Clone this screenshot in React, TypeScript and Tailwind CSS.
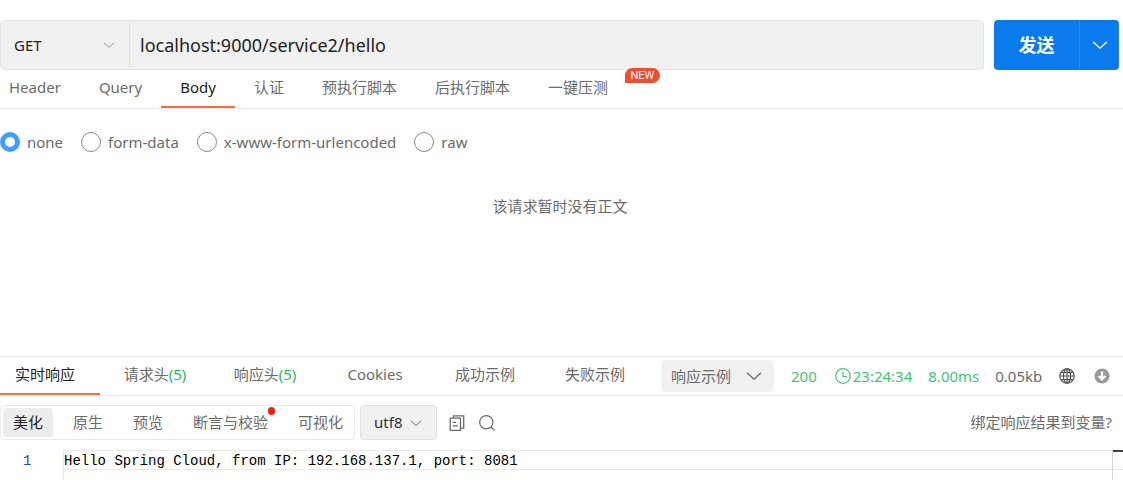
import { useState } from "react";

const requestTabs = [
  "Header",
  "Query",
  "Body",
  "认证",
  "预执行脚本",
  "后执行脚本",
  "一键压测",
];

const bodyTypes = ["none", "form-data", "x-www-form-urlencoded", "raw"];

const responseTabs = [
  { label: "实时响应" },
  { label: "请求头", count: 5 },
  { label: "响应头", count: 5 },
  { label: "Cookies" },
  { label: "成功示例" },
  { label: "失败示例" },
];

const viewModes = ["美化", "原生", "预览", "断言与校验", "可视化"];

const Chevron = ({ className }: { className: string }) => (
  <svg viewBox="0 0 16 8" fill="none" stroke="currentColor" className={className}>
    <path d="M1 0.8 8 7.2 15 0.8" strokeWidth="1.3" />
  </svg>
);

const ClockIcon = () => (
  <svg viewBox="0 0 16 16" fill="none" stroke="currentColor" className="h-4 w-4">
    <circle cx="8" cy="8" r="7.3" strokeWidth="1.2" />
    <path d="M8 4v4.5h4" strokeWidth="1.2" />
  </svg>
);

const GlobeIcon = () => (
  <svg viewBox="0 0 16 16" fill="none" stroke="currentColor" className="h-4 w-4">
    <circle cx="8" cy="8" r="7.2" strokeWidth="1.2" />
    <ellipse cx="8" cy="8" rx="3.6" ry="7.2" strokeWidth="1.2" />
    <path d="M8 .8v14.4M.8 8h14.4M2 4.4h12M2 11.6h12" strokeWidth="1.2" />
  </svg>
);

const DownloadIcon = () => (
  <svg viewBox="0 0 16 16" className="h-4 w-4">
    <circle cx="8" cy="8" r="7.6" fill="#999" />
    <path d="M8 3.4v7M4.6 8 8 11.4 11.4 8" fill="none" stroke="#fff" strokeWidth="2.2" />
  </svg>
);

const CopyIcon = () => (
  <svg viewBox="0 0 16 16" fill="none" stroke="currentColor" className="h-4 w-4">
    <path d="M4.5 3V.8h10.2v12.4h-3" strokeWidth="1.3" />
    <rect x="1.2" y="3.2" width="10.3" height="12.2" rx="0.5" strokeWidth="1.3" />
    <path d="M3.8 7.4h3.4M3.8 10.9h5" strokeWidth="1.3" />
  </svg>
);

const SearchIcon = () => (
  <svg viewBox="0 0 16 16" fill="none" stroke="currentColor" className="h-4 w-4">
    <circle cx="7.3" cy="7.3" r="6.6" strokeWidth="1.2" />
    <path d="m12 12 3.6 3.4" strokeWidth="1.3" />
  </svg>
);

const RequestBar = () => (
  <div className="flex gap-[10px] pr-1">
    <div className="flex h-[50px] flex-1 items-center rounded border border-[#e4e4e4] bg-[#f1f1f1]">
      <div className="relative flex h-[46px] w-[129px] items-center border-r border-[#e2e2e2]">
        <select
          aria-label="请求方法"
          className="h-full w-full appearance-none pl-[13px] text-[#222] outline-none"
        >
          <option>GET</option>
          <option>POST</option>
        </select>
        <Chevron className="pointer-events-none absolute right-[14px] h-2 w-3 text-[#999]" />
      </div>
      <input
        aria-label="请求地址"
        defaultValue="localhost:9000/service2/hello"
        className="h-full flex-1 px-[10px] text-lg text-[#222] outline-none"
      />
    </div>
    <div className="flex h-[50px] w-[125px] overflow-hidden rounded bg-[#097bed] text-white">
      <button className="flex-1 text-lg font-bold">发送</button>
      <button
        aria-label="更多"
        className="flex w-10 items-center justify-center border-l border-[#2489f1]"
      >
        <Chevron className="h-2 w-4" />
      </button>
    </div>
  </div>
);

const RequestTabs = () => (
  <div className="flex h-[39px] border-b border-[#ebebeb]">
    <div className="-ml-[10px] flex">
      {requestTabs.map((tab) => (
        <button
          key={tab}
          className={`border-b-2 px-[19px] pb-[2px] ${
            tab === "Body" ? "border-[#ff6c37] text-[#222]" : "border-transparent"
          }`}
        >
          {tab}
        </button>
      ))}
    </div>
    <span className="-mt-[2px] -ml-[2px] flex h-[15px] w-[35px] items-center justify-center rounded-t-full rounded-br-full bg-[#f04e30] font-[Roboto,sans-serif] text-[11px] text-white">
      NEW
    </span>
  </div>
);

const BodyTypes = () => {
  const [selected, setSelected] = useState("none");

  return (
    <div className="flex h-[65px] items-center gap-[18px]">
      {bodyTypes.map((type) => (
        <label key={type} className="flex items-center gap-[7px]">
          <input
            type="radio"
            name="bodyType"
            checked={selected === type}
            onChange={() => setSelected(type)}
            className="h-5 w-5 appearance-none rounded-full border border-[#888] bg-white checked:border-[5px] checked:border-[#409eff]"
          />
          {type}
        </label>
      ))}
    </div>
  );
};

const ResponseBar = () => (
  <div className="flex h-10 items-stretch border-y border-[#ebebeb]">
    <div className="flex overflow-hidden">
      <div className="-ml-[10px] flex">
        {responseTabs.map((tab, i) => (
          <button
            key={tab.label}
            className={`w-[110px] border-b-2 pb-[2px] ${
              i === 0 ? "border-[#ff6c37] text-[#222]" : "border-transparent"
            }`}
          >
            {tab.label}
            {tab.count && <span className="text-[#1fba5c]">({tab.count})</span>}
          </button>
        ))}
      </div>
    </div>
    <button className="mt-[3px] ml-[11px] flex h-8 w-[113px] items-center justify-between rounded bg-[#f1f1f1] pr-3 pl-[10px]">
      响应示例
      <Chevron className="h-2 w-4" />
    </button>
    <div className="ml-[17px] flex flex-1 items-center text-[#3fc474]">
      <span>200</span>
      <span className="ml-[18px] flex items-center gap-[2px]">
        <ClockIcon />
        23:24:34
      </span>
      <span className="ml-4">8.00ms</span>
      <span className="ml-4 text-[#6b6b6b]">0.05kb</span>
      <div className="ml-auto flex gap-[19px] pr-[13px] text-[#555]">
        <button aria-label="网络">
          <GlobeIcon />
        </button>
        <button aria-label="下载">
          <DownloadIcon />
        </button>
      </div>
    </div>
  </div>
);

const ResponseTools = () => (
  <div className="mt-[9px] flex h-[35px] items-center">
    <div className="flex h-full gap-[10px] rounded border border-[#ebebeb] p-[2px] pr-px">
      {viewModes.map((mode) => (
        <button
          key={mode}
          className={`relative rounded px-[10px] pb-[2px] ${
            mode === "美化" ? "bg-[#ededed] text-[#222]" : ""
          }`}
        >
          {mode}
          {mode === "断言与校验" && (
            <span className="absolute -top-px right-[3px] h-2 w-[7px] rounded-full bg-[#ee2211]" />
          )}
        </button>
      ))}
    </div>
    <div className="relative ml-[5px] flex h-full w-[77px] items-center rounded border border-[#e2e2e2] bg-[#f1f1f1]">
      <select
        aria-label="编码"
        className="h-full w-full appearance-none pb-[2px] pl-[13px] text-[#333] outline-none"
      >
        <option>utf8</option>
        <option>gbk</option>
      </select>
      <Chevron className="pointer-events-none absolute right-[14px] h-2 w-3" />
    </div>
    <button aria-label="复制" className="ml-3">
      <CopyIcon />
    </button>
    <button aria-label="搜索" className="ml-[14px]">
      <SearchIcon />
    </button>
    <a href="#" className="mr-[11px] ml-auto pb-[2px]">
      绑定响应结果到变量?
    </a>
  </div>
);

const ResponseBody = () => (
  <div className="mt-[10px] flex h-[30px] bg-[#fffffe] font-['Liberation_Mono',monospace] text-sm leading-[22px]">
    <span className="w-[63px] pl-[23px] text-[#23508c]">1</span>
    <div className="flex-1 border-l border-[#e8e8e8]">
      <pre className="h-5 border-y border-[#ebebeb] font-[inherit] leading-5 text-black">
        Hello Spring Cloud, from IP: 192.168.137.1, port: 8081
      </pre>
    </div>
    <div className="w-[11px] border-l border-[#d8d8d8]">
      <div className="h-5 border-t-2 border-b border-t-[#444] border-b-[#ebebeb]" />
    </div>
  </div>
);

const App = () => {
  return (
    <main className="bg-white pt-5 font-['Noto_Sans','Noto_Sans_CJK_SC',sans-serif] text-[15px] leading-5 text-[#6b6b6b]">
      <RequestBar />
      <RequestTabs />
      <BodyTypes />
      <p className="mt-[22px] mb-[140px] pr-[3px] text-center">该请求暂时没有正文</p>
      <ResponseBar />
      <ResponseTools />
      <ResponseBody />
    </main>
  );
};

export default App;
